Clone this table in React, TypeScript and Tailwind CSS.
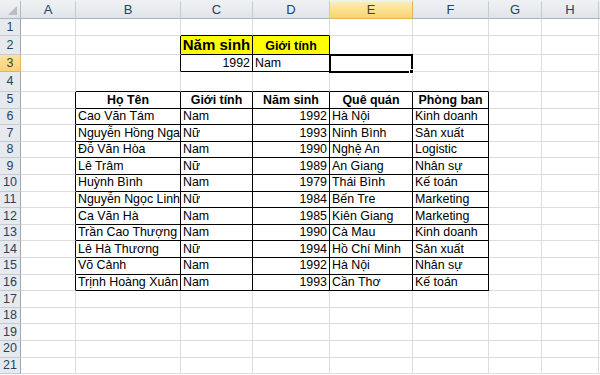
import React from "react";

const COLS = ["A", "B", "C", "D", "E", "F", "G", "H", ""];

const TABLE: string[][] = [
  ["Cao Văn Tám", "Nam", "1992", "Hà Nội", "Kinh doanh"],
  ["Nguyễn Hồng Nga", "Nữ", "1993", "Ninh Bình", "Sản xuất"],
  ["Đỗ Văn Hòa", "Nam", "1990", "Nghệ An", "Logistic"],
  ["Lê Trâm", "Nữ", "1989", "An Giang", "Nhân sự"],
  ["Huỳnh Bình", "Nam", "1979", "Thái Bình", "Kế toán"],
  ["Nguyễn Ngọc Linh", "Nữ", "1984", "Bến Tre", "Marketing"],
  ["Ca Văn Hà", "Nam", "1985", "Kiên Giang", "Marketing"],
  ["Trần Cao Thượng", "Nam", "1990", "Cà Mau", "Kinh doanh"],
  ["Lê Hà Thương", "Nữ", "1994", "Hồ Chí Minh", "Sản xuất"],
  ["Võ Cảnh", "Nam", "1992", "Hà Nội", "Nhân sự"],
  ["Trịnh Hoàng Xuân", "Nam", "1993", "Cần Thơ", "Kế toán"],
];

const HEAD = ["Họ Tên", "Giới tính", "Năm sinh", "Quê quán", "Phòng ban"];

type Content = { text: string; align: "l" | "c" | "r"; bold?: boolean; big?: boolean; yellow?: boolean };

function getContent(r: number, c: number): Content | null {
  if (r === 2 && c === 3) return { text: "Năm sinh", align: "c", bold: true, big: true, yellow: true };
  if (r === 2 && c === 4) return { text: "Giới tính", align: "c", bold: true, yellow: true };
  if (r === 3 && c === 3) return { text: "1992", align: "r" };
  if (r === 3 && c === 4) return { text: "Nam", align: "l" };
  if (r === 5 && c >= 2 && c <= 6) return { text: HEAD[c - 2], align: "c", bold: true };
  if (r >= 6 && r <= 16 && c >= 2 && c <= 6) {
    return { text: TABLE[r - 6][c - 2], align: c === 4 ? "r" : "l" };
  }
  return null;
}

function Cell({ r, c }: { r: number; c: number }) {
  const rightBlack = (r >= 5 && r <= 16 && c >= 1 && c <= 6) || ((r === 2 || r === 3) && c >= 2 && c <= 4);
  const bottomBlack = (r >= 4 && r <= 16 && c >= 2 && c <= 6) || (r >= 1 && r <= 3 && (c === 3 || c === 4));
  const content = getContent(r, c);
  const selected = r === 3 && c === 5;
  return (
    <div
      className={
        "relative flex min-w-0 items-center whitespace-nowrap border-r border-b " +
        (selected ? "z-10 " : "") +
        (rightBlack ? "border-r-black " : "border-r-[#dadcdd] ") +
        (bottomBlack ? "border-b-black " : "border-b-[#dadcdd] ") +
        (content?.yellow ? "bg-[#ffff00] " : "bg-white ") +
        (content?.align === "r" ? "justify-end pr-[2px] " : content?.align === "c" ? "justify-center " : "pl-[2px] ")
      }
    >
      {content && (
        <span
          className={
            "overflow-hidden " +
            (content.bold ? "font-bold " : "") +
            (content.big ? "text-[15px] " : "text-[12.4px] ") +
            (content.yellow && !content.big ? "pt-[3px] " : "") +
            "text-black"
          }
        >
          {content.text}
        </span>
      )}
      {selected && (
        <div className="absolute left-[-1px] top-[-1px] w-[84px] h-[19px] border-2 border-black">
          <div className="absolute right-[-3px] bottom-[-3px] w-[5px] h-[5px] bg-black border border-white" />
        </div>
      )}
    </div>
  );
}

export default function App() {
  const rows = Array.from({ length: 21 }, (_, i) => i + 1);
  return (
    <div className="w-[600px] h-[375px] overflow-hidden bg-white font-['Liberation_Sans',Arial,sans-serif]">
      <div className="grid grid-cols-[21px_55px_105px_72px_77px_83px_76px_53px_57px_1fr] grid-rows-[19px_17px_19px_17px_20px_repeat(17,16.6px)]">
        <div className="relative border-t-2 border-t-[#eef0f2] border-r border-r-[#b1b7bf] border-b border-b-[#aab3be] bg-gradient-to-b from-[#eef1f4] to-[#e0e4e9]">
          <div className="absolute right-[3px] bottom-[3px] w-0 h-0 border-l-[9px] border-l-transparent border-b-[9px] border-b-[#b9bec5]" />
        </div>
        {COLS.map((l, i) =>
          i === 4 ? (
            <div
              key={l + i}
              className="flex items-center justify-center border-t-2 border-t-[#eef0f2] border-r border-r-[#e2b455] border-b border-b-[#e2b455] bg-gradient-to-b from-[#fdecb0] to-[#f9d46c] text-[13px] text-[#4b4226]"
            >
              {l}
            </div>
          ) : (
            <div
              key={l + i}
              className="flex items-center justify-center border-t-2 border-t-[#eef0f2] border-r border-r-[#c6cbd2] border-b border-b-[#aab3be] bg-gradient-to-b from-[#eef1f4] to-[#e0e4e9] text-[13px] text-[#27415f]"
            >
              {l}
            </div>
          )
        )}
        {rows.map((r) => (
          <React.Fragment key={r}>
            {r === 3 ? (
              <div className="flex items-center justify-center border-r border-r-[#e2b455] border-b border-b-[#e2b455] bg-gradient-to-b from-[#fbe3a0] to-[#f8d27a] text-[12.5px] text-[#4b4226]">
                {r}
              </div>
            ) : (
              <div className="flex items-center justify-center border-r border-r-[#9fa7b1] border-b border-b-[#c6cbd2] bg-[#e6eaef] text-[12.5px] text-[#27415f]">
                {r}
              </div>
            )}
            {COLS.map((_, ci) => (
              <Cell key={ci} r={r} c={ci + 1} />
            ))}
          </React.Fragment>
        ))}
      </div>
    </div>
  );
}
